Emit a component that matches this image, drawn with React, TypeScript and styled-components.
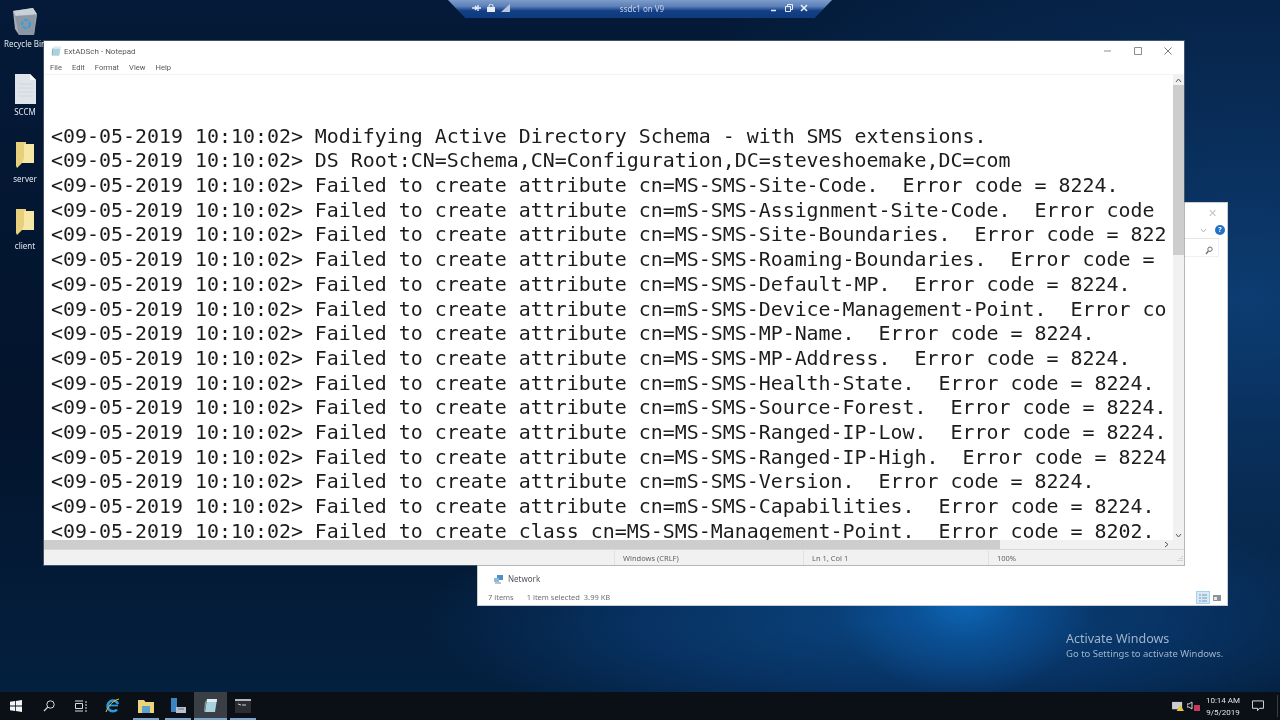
import React from 'react';
import styled, { createGlobalStyle } from 'styled-components';

const GlobalStyle = createGlobalStyle`
  html, body {
    margin: 0;
    padding: 0;
    height: 100%;
    overflow: hidden;
    background: #04152e;
    font-family: "Noto Sans", "Open Sans", sans-serif;
  }
  * { box-sizing: border-box; }
`;

const Screen = styled.div`
  width: 1280px;
  height: 720px;
  display: flex;
  flex-direction: column;
  overflow: hidden;
  filter: blur(0.35px);
`;

const Desktop = styled.div`
  position: relative;
  flex: 1;
  overflow: hidden;
  background:
    radial-gradient(ellipse 130px 95px at 965px 600px, #0d68b8 0%, rgba(11, 84, 156, 0.75) 45%, rgba(9, 60, 120, 0) 100%),
    radial-gradient(ellipse 480px 120px at 900px 620px, #0a447f 0%, rgba(9, 58, 114, 0.7) 55%, rgba(8, 50, 100, 0) 100%),
    radial-gradient(ellipse 700px 420px at 1250px 300px, #0c3c72 0%, rgba(6, 30, 62, 0) 100%),
    linear-gradient(180deg, #041a38 0%, #03142c 60%, #04203f 100%);
`;

/* desktop icons */
const IconColumn = styled.div`
  position: absolute;
  left: 0;
  top: 5px;
  width: 50px;
  display: flex;
  flex-direction: column;
  align-items: center;
`;

const DesktopIcon = styled.div<{ $height: number; $gap: number }>`
  width: 50px;
  height: ${p => p.$height}px;
  display: flex;
  flex-direction: column;
  align-items: center;
  justify-content: flex-end;
  color: #e4e8ee;
  font-size: 8px;
  line-height: 11px;
  white-space: nowrap;
  svg { display: block; margin-bottom: ${p => p.$gap}px; }
`;

/* remote session bar */
const SessionBar = styled.div`
  position: absolute;
  left: 448px;
  top: 0;
  width: 384px;
  height: 18px;
  display: flex;
  align-items: center;
  padding: 0 24px 2px;
  color: #d8e2f0;
  clip-path: polygon(0 0, 100% 0, 95.5% 100%, 4.5% 100%);
  background: linear-gradient(180deg, #7d9ccb 0%, #5d80b8 35%, #123f86 60%, #0f3a7e 100%);
`;

const SessionTitle = styled.span`
  flex: 1;
  text-align: center;
  font-size: 8px;
  color: #c6d2e4;
  padding-left: 4px;
`;

const SessionButtons = styled.div<{ $gap: number }>`
  display: flex;
  align-items: center;
  gap: ${p => p.$gap}px;
`;

/* window behind notepad */
const ExplorerWindow = styled.div`
  position: absolute;
  left: 478px;
  top: 203px;
  width: 749px;
  height: 402px;
  background: #fff;
  color: #55585c;
  box-shadow: 0 0 0 1px #c9ccd0;
`;

const ExplorerTop = styled.div`
  position: absolute;
  right: 0;
  top: 0;
  width: 43px;
  height: 60px;
  display: flex;
  flex-direction: column;
  align-items: flex-end;
  padding: 4px 10px 0 0;
  color: #c3c6ca;
`;

const ExplorerClose = styled.span`
  font-size: 11px;
  line-height: 12px;
`;

const HelpRow = styled.div`
  display: flex;
  align-items: center;
  gap: 8px;
  margin: 6px -8px 0 0;
`;

const HelpBadge = styled.span`
  width: 10px;
  height: 10px;
  border-radius: 50%;
  background: #2472c8;
  color: #fff;
  font-size: 7px;
  font-weight: 700;
  line-height: 10px;
  text-align: center;
`;

const SearchBox = styled.div`
  width: 35px;
  height: 19px;
  margin: 3px -2px 0 0;
  padding: 7px 5px 0 0;
  display: flex;
  justify-content: flex-end;
  align-items: flex-start;
  border-top: 1px solid #e6e6e6;
  border-right: 1px solid #f0f0f0;
  border-bottom: 1px solid #f0f0f0;
`;

const ExplorerBottom = styled.div`
  position: absolute;
  left: 0;
  right: 0;
  bottom: 0;
  height: 43px;
  padding: 8px 10px 0 10px;
  display: flex;
  flex-direction: column;
  font-size: 7.5px;
`;

const NetworkRow = styled.div`
  display: flex;
  align-items: center;
  gap: 4px;
  margin-left: 5px;
  height: 16px;
  font-size: 8px;
  color: #50555a;
`;

const StatusRow = styled.div`
  display: flex;
  align-items: center;
  height: 16px;
  margin-top: 3px;
  color: #6d7176;
`;

const StatusPart = styled.span`
  margin-right: 13px;
`;

const ViewButtons = styled.div`
  position: absolute;
  right: 4px;
  bottom: 1px;
  display: flex;
  align-items: center;
  gap: 1px;
`;

const ViewButton = styled.span<{ $active?: boolean }>`
  width: ${p => (p.$active ? 14 : 12)}px;
  height: 13px;
  display: flex;
  align-items: center;
  justify-content: center;
  background: ${p => (p.$active ? '#d6e9f8' : 'transparent')};
  border: 1px solid ${p => (p.$active ? '#a5d2ef' : 'transparent')};
  svg { display: block; }
`;

/* notepad */
const Notepad = styled.div`
  position: absolute;
  left: 44px;
  top: 41px;
  width: 1140px;
  height: 524px;
  display: flex;
  flex-direction: column;
  background: #fff;
  box-shadow: 0 0 0 1px rgba(120, 125, 130, 0.55);
`;

const TitleBar = styled.div`
  height: 19px;
  padding: 1px 1px 0 7px;
  display: flex;
  align-items: center;
  font-family: Roboto, sans-serif;
  font-size: 8px;
  color: #55595e;
  svg { display: block; }
`;

const TitleText = styled.span`
  flex: 1;
  margin-left: 2px;
`;

const WindowButton = styled.span`
  width: 30px;
  display: flex;
  justify-content: center;
`;

const MenuBar = styled.div`
  height: 15px;
  display: flex;
  align-items: center;
  padding: 0 0 0 6px;
  gap: 10px;
  font-family: Roboto, sans-serif;
  font-size: 7.6px;
  color: #55595e;
  border-bottom: 1px solid #f3f3f3;
`;

const EditArea = styled.div`
  flex: 1;
  display: flex;
  flex-direction: column;
  min-height: 0;
`;

const TextRow = styled.div`
  flex: 1;
  display: flex;
  min-height: 0;
`;

const LogText = styled.pre`
  flex: 1;
  min-width: 0;
  margin: 0 7px 0 0;
  padding: 49.7px 0 0 7px;
  overflow: hidden;
  font-family: "DejaVu Sans Mono", "Liberation Mono", monospace;
  font-size: 19.93px;
  line-height: 24.69px;
  color: #1c1c1c;
  white-space: pre;
`;

const HScroll = styled.div`
  height: 9px;
  display: flex;
  align-items: center;
  background: #f1f1f1;
`;

const HThumb = styled.div`
  width: 956px;
  height: 9px;
  background: #cdcdcd;
`;

const HSpacer = styled.div`
  flex: 1;
`;

const ScrollArrow = styled.span`
  width: 27px;
  padding-right: 9px;
  display: flex;
  justify-content: center;
  svg { display: block; }
`;

const VScroll = styled.div`
  width: 11px;
  display: flex;
  flex-direction: column;
  align-items: center;
  background: #f1f1f1;
`;

const VThumb = styled.div`
  width: 11px;
  height: 170px;
  background: #cdcdcd;
`;

const VArrow = styled.span`
  height: 10px;
  display: flex;
  align-items: center;
  svg { display: block; }
`;

const VSpacer = styled.div`
  flex: 1;
`;

const StatusBar = styled.div`
  height: 16px;
  display: flex;
  align-items: center;
  background: #f1f1f1;
  border-top: 1px solid #d9d9d9;
  font-size: 7.5px;
  color: #5f6367;
`;

const StatusCell = styled.div<{ $width: number; $first?: boolean }>`
  width: ${p => p.$width}px;
  height: 100%;
  display: flex;
  align-items: center;
  padding-left: 8px;
  border-left: ${p => (p.$first ? 'none' : '1px solid #e2e2e2')};
`;

const Grip = styled.span`
  margin-left: auto;
  margin-right: 1px;
  svg { display: block; }
`;

/* activate watermark */
const Watermark = styled.div`
  position: absolute;
  left: 1066px;
  top: 631px;
  color: #9fb4cc;
`;

const WatermarkTitle = styled.div`
  font-size: 12.5px;
  line-height: 16px;
`;

const WatermarkSub = styled.div`
  font-size: 9.5px;
  line-height: 14px;
`;

/* taskbar */
const Taskbar = styled.div`
  height: 28px;
  display: flex;
  align-items: stretch;
  background: #0b1017;
`;

const TaskButton = styled.div<{ $active?: boolean; $running?: boolean }>`
  width: 32.4px;
  position: relative;
  display: flex;
  align-items: center;
  justify-content: center;
  background: ${p => (p.$active ? '#3a3f45' : 'transparent')};
  svg { display: block; }
  &::after {
    content: '';
    display: ${p => (p.$running ? 'block' : 'none')};
    position: absolute;
    left: ${p => (p.$active ? 0 : 3)}px;
    right: ${p => (p.$active ? 0 : 3)}px;
    bottom: 0;
    height: 2px;
    background: #7fa6c8;
  }
`;

const TaskSpacer = styled.div`
  flex: 1;
`;

const Tray = styled.div`
  display: flex;
  align-items: center;
  color: #d5d8dc;
  margin: 3px 2px 3px 0;
  padding-right: 12px;
  border-right: 1px solid #3a3f45;
  svg { display: block; }
`;

const TrayIcon = styled.span`
  margin-right: 3px;
`;

const Clock = styled.div`
  width: 44px;
  margin: 1px 6px 0 1px;
  text-align: center;
  font-family: Roboto, sans-serif;
  font-size: 8px;
  line-height: 12px;
  color: #dfe2e6;
`;

const NotifyButton = styled.span`
  width: 14px;
  display: flex;
  justify-content: center;
`;

const PREFIX = '<09-05-2019 10:10:02> ';
const failed = (what: string, code = '8224') => `Failed to create ${what}.  Error code = ${code}.`;

const LINES = [
  'Modifying Active Directory Schema - with SMS extensions.',
  'DS Root:CN=Schema,CN=Configuration,DC=steveshoemake,DC=com',
  failed('attribute cn=MS-SMS-Site-Code'),
  failed('attribute cn=mS-SMS-Assignment-Site-Code'),
  failed('attribute cn=MS-SMS-Site-Boundaries'),
  failed('attribute cn=MS-SMS-Roaming-Boundaries'),
  failed('attribute cn=MS-SMS-Default-MP'),
  failed('attribute cn=mS-SMS-Device-Management-Point'),
  failed('attribute cn=MS-SMS-MP-Name'),
  failed('attribute cn=MS-SMS-MP-Address'),
  failed('attribute cn=mS-SMS-Health-State'),
  failed('attribute cn=mS-SMS-Source-Forest'),
  failed('attribute cn=MS-SMS-Ranged-IP-Low'),
  failed('attribute cn=MS-SMS-Ranged-IP-High'),
  failed('attribute cn=mS-SMS-Version'),
  failed('attribute cn=mS-SMS-Capabilities'),
  failed('class cn=MS-SMS-Management-Point', '8202'),
];

const FolderIcon = () => (
  <svg width="18" height="27" viewBox="0 0 18 27">
    <path d="M0 1 H10 V3 H18 V22 H6 L1 27 L0 25 Z" fill="#e8cf7c" />
    <path d="M8 3 H18 V22 H6 L8 17 Z" fill="#f7e7a4" />
  </svg>
);

const DocIcon = () => (
  <svg width="21" height="30" viewBox="0 0 21 30">
    <path d="M0 0 H15 L21 6 V30 H0 Z" fill="#dfe3ea" />
    <path d="M15 0 L21 6 H15 Z" fill="#fafbfc" />
    <path d="M3 10 H18 M3 14 H18 M3 18 H18 M3 22 H18" stroke="#d2d6dd" />
  </svg>
);

const BinIcon = () => (
  <svg width="26" height="29" viewBox="0 0 26 29">
    <path d="M1 4 L21 1 L25 8 L22 28 H7 L3 22 Z" fill="#a4adb7" />
    <path d="M1 4 L21 1 L25 7 L4 9 Z" fill="#c9d0d6" />
    <path d="M3 9 L24 8 L22 28 H7 Z" fill="#8d97a3" />
    <circle cx="14" cy="17" r="4" fill="none" stroke="#2f9fe0" strokeWidth="2" strokeDasharray="4 1.5" />
  </svg>
);

const NotepadIcon = ({ size }: { size: number }) => (
  <svg width={size} height={size} viewBox="0 0 16 16">
    <path d="M4 1 H14 L12 14 H2 Z" fill="#a9d3dc" />
    <path d="M4 1 H14 L13.6 4 H3.6 Z" fill="#dfeef2" />
    <path d="M2 14 L3.5 3 L2 4 L1 13 Z" fill="#7f9aa3" />
  </svg>
);

const App: React.FC = () => (
  <Screen>
    <GlobalStyle />
    <Desktop>
      <IconColumn>
        <DesktopIcon $height={44} $gap={2}>
          <BinIcon />
          Recycle Bin
        </DesktopIcon>
        <DesktopIcon $height={68} $gap={2}>
          <DocIcon />
          SCCM
        </DesktopIcon>
        <DesktopIcon $height={67} $gap={5}>
          <FolderIcon />
          server
        </DesktopIcon>
        <DesktopIcon $height={67} $gap={5}>
          <FolderIcon />
          client
        </DesktopIcon>
      </IconColumn>

      <SessionBar>
        <SessionButtons $gap={6}>
          <svg width="9" height="8" viewBox="0 0 9 8"><path d="M0 4 H9 M6 1 V7 M3 2 L5 4 L3 6" stroke="#e6edf6" strokeWidth="1.4" fill="none" /></svg>
          <svg width="8" height="8" viewBox="0 0 8 8"><path d="M0 3 H8 V8 H0 Z" fill="#e6edf6" /><path d="M2 3 V2 A2 2 0 0 1 6 2 V3" stroke="#e6edf6" fill="none" /></svg>
          <svg width="9" height="8" viewBox="0 0 9 8"><path d="M0 8 L9 0 V8 Z" fill="#b9c7dc" /></svg>
        </SessionButtons>
        <SessionTitle>ssdc1 on V9</SessionTitle>
        <SessionButtons $gap={7}>
          <svg width="8" height="8" viewBox="0 0 8 8"><path d="M1 6.5 H6" stroke="#e6edf6" strokeWidth="1.4" /></svg>
          <svg width="8" height="8" viewBox="0 0 8 8"><path d="M0.5 2.5 H5.5 V7.5 H0.5 Z M2.5 2.5 V0.5 H7.5 V5.5 H5.5" stroke="#e6edf6" fill="none" /></svg>
          <svg width="8" height="8" viewBox="0 0 8 8"><path d="M1 1 L7 7 M7 1 L1 7" stroke="#e6edf6" strokeWidth="1.6" /></svg>
        </SessionButtons>
      </SessionBar>

      <ExplorerWindow>
        <ExplorerTop>
          <ExplorerClose>✕</ExplorerClose>
          <HelpRow>
            <svg width="7" height="5" viewBox="0 0 7 5"><path d="M1 1 L3.5 4 L6 1" stroke="#b5b8bc" fill="none" /></svg>
            <HelpBadge>?</HelpBadge>
          </HelpRow>
          <SearchBox>
            <svg width="8" height="9" viewBox="0 0 8 9"><circle cx="5" cy="3.2" r="2.2" stroke="#6a6d71" fill="none" /><path d="M3.4 5 L1 8" stroke="#6a6d71" strokeWidth="1.3" /></svg>
          </SearchBox>
        </ExplorerTop>
        <ExplorerBottom>
          <NetworkRow>
            <svg width="11" height="11" viewBox="0 0 11 11"><path d="M4 2 H10 V7 H4 Z" fill="#4f8fc4" /><path d="M1 5 H6 V9 H1 Z" fill="#8db9da" /><path d="M2 10 H8" stroke="#7a8894" /></svg>
            <span>Network</span>
          </NetworkRow>
          <StatusRow>
            <StatusPart>7 items</StatusPart>
            <span>1 item selected&nbsp; 3.99 KB</span>
          </StatusRow>
          <ViewButtons>
            <ViewButton $active><svg width="8" height="8" viewBox="0 0 8 8"><path d="M0 1 H2 M3 1 H8 M0 4 H2 M3 4 H8 M0 7 H2 M3 7 H8" stroke="#7f97ad" /></svg></ViewButton>
            <ViewButton><svg width="8" height="8" viewBox="0 0 8 8"><path d="M0 1 H8 V7 H0 Z" fill="#8b9299" /><path d="M1 3 H4 V6 H1 Z" fill="#e8eaec" /></svg></ViewButton>
          </ViewButtons>
        </ExplorerBottom>
      </ExplorerWindow>

      <Notepad>
        <TitleBar>
          <NotepadIcon size={11} />
          <TitleText>ExtADSch - Notepad</TitleText>
          <WindowButton><svg width="10" height="10" viewBox="0 0 10 10"><path d="M1 5 H8" stroke="#8a8d91" /></svg></WindowButton>
          <WindowButton><svg width="10" height="10" viewBox="0 0 10 10"><path d="M1.5 1.5 H8.5 V8.5 H1.5 Z" stroke="#8a8d91" fill="none" /></svg></WindowButton>
          <WindowButton><svg width="10" height="10" viewBox="0 0 10 10"><path d="M1.5 1.5 L8.5 8.5 M8.5 1.5 L1.5 8.5" stroke="#777a7e" /></svg></WindowButton>
        </TitleBar>
        <MenuBar>
          <span>File</span>
          <span>Edit</span>
          <span>Format</span>
          <span>View</span>
          <span>Help</span>
        </MenuBar>
        <EditArea>
          <TextRow>
            <LogText>{LINES.map(line => PREFIX + line).join('\n')}</LogText>
            <VScroll>
              <VArrow><svg width="7" height="5" viewBox="0 0 7 5"><path d="M1 4 L3.5 1 L6 4" stroke="#555" fill="none" /></svg></VArrow>
              <VThumb />
              <VSpacer />
              <VArrow><svg width="7" height="5" viewBox="0 0 7 5"><path d="M1 1 L3.5 4 L6 1" stroke="#555" fill="none" /></svg></VArrow>
            </VScroll>
          </TextRow>
          <HScroll>
            <HThumb />
            <HSpacer />
            <ScrollArrow><svg width="5" height="7" viewBox="0 0 5 7"><path d="M1 1 L4 3.5 L1 6" stroke="#555" fill="none" /></svg></ScrollArrow>
          </HScroll>
        </EditArea>
        <StatusBar>
          <StatusCell $width={570} $first />
          <StatusCell $width={189}>Windows (CRLF)</StatusCell>
          <StatusCell $width={185}>Ln 1, Col 1</StatusCell>
          <StatusCell $width={196}>
            100%
            <Grip><svg width="6" height="6" viewBox="0 0 6 6"><path d="M5 1 V2 M3 3 V4 M5 3 V4 M1 5 V6 M3 5 V6 M5 5 V6" stroke="#b5b7ba" /></svg></Grip>
          </StatusCell>
        </StatusBar>
      </Notepad>

      <Watermark>
        <WatermarkTitle>Activate Windows</WatermarkTitle>
        <WatermarkSub>Go to Settings to activate Windows.</WatermarkSub>
      </Watermark>
    </Desktop>

    <Taskbar>
      <TaskButton>
        <svg width="12" height="12" viewBox="0 0 12 12"><path d="M0 1.8 L5 1 V5.6 H0 Z M5.8 0.9 L12 0 V5.6 H5.8 Z M0 6.4 H5 V11 L0 10.2 Z M5.8 6.4 H12 V12 L5.8 11.1 Z" fill="#f2f4f6" /></svg>
      </TaskButton>
      <TaskButton>
        <svg width="12" height="12" viewBox="0 0 12 12"><circle cx="7.5" cy="4.5" r="3.7" stroke="#d8dbde" fill="none" /><path d="M4.8 7.2 L1 11" stroke="#d8dbde" strokeWidth="1.2" /></svg>
      </TaskButton>
      <TaskButton>
        <svg width="12" height="12" viewBox="0 0 12 12"><path d="M0.5 3.5 H7.5 V8.5 H0.5 Z M0 1 H8 M0 11 H8 M10 2 H12 M10 5 H12 M10 8 H12 M10 11 H12" stroke="#d8dbde" fill="none" /></svg>
      </TaskButton>
      <TaskButton>
        <svg width="16" height="16" viewBox="0 0 16 16">
          <path d="M13 6 A5.4 5.4 0 1 0 12 11.5" stroke="#2a9ad8" strokeWidth="2.6" fill="none" />
          <path d="M4 7.5 H13" stroke="#2a9ad8" strokeWidth="1.8" />
          <path d="M1 14 C 3 8 9 2 14 1" stroke="#e8c24a" strokeWidth="1" fill="none" />
        </svg>
      </TaskButton>
      <TaskButton $running>
        <svg width="16" height="14" viewBox="0 0 16 14"><path d="M0 1 H6 L7.5 3 H16 V14 H0 Z" fill="#efd37a" /><path d="M4 7 H12 V14 H4 Z" fill="#5da2c9" /></svg>
      </TaskButton>
      <TaskButton $running>
        <svg width="16" height="16" viewBox="0 0 16 16"><path d="M1 0 H7 V14 H1 Z" fill="#3c83c4" /><path d="M6 9 H16 V15 H6 Z" fill="#b9c2cc" /><path d="M8 11 H14" stroke="#6c7680" /></svg>
      </TaskButton>
      <TaskButton $active $running>
        <NotepadIcon size={16} />
      </TaskButton>
      <TaskButton $running>
        <svg width="16" height="14" viewBox="0 0 16 14"><path d="M0 0 H16 V14 H0 Z" fill="#2b2d30" /><path d="M0 0 H16 V2 H0 Z" fill="#b5b8bb" /><path d="M3 5 L6 6 M7 6 H11" stroke="#cfd2d5" /></svg>
      </TaskButton>
      <TaskSpacer />
      <Tray>
        <TrayIcon>
          <svg width="12" height="11" viewBox="0 0 13 12"><path d="M0 1 H11 V9 H0 Z" fill="#c9ccd0" /><path d="M5 11 L9 4 L13 11 Z" fill="#e9c53a" /></svg>
        </TrayIcon>
        <svg width="13" height="10" viewBox="0 0 13 10"><path d="M0 3 H2 L5 1 V8 L2 6 H0 Z" stroke="#d5d8dc" fill="none" /><rect x="7" y="4" width="6" height="6" fill="#c73a5c" /></svg>
        <Clock>10:14 AM<br />9/5/2019</Clock>
        <NotifyButton>
          <svg width="12" height="12" viewBox="0 0 13 12"><path d="M0.5 0.5 H12.5 V8.5 H8 L6 11 V8.5 H0.5 Z" stroke="#e4e6e8" fill="none" /></svg>
        </NotifyButton>
      </Tray>
    </Taskbar>
  </Screen>
);

export default App;
